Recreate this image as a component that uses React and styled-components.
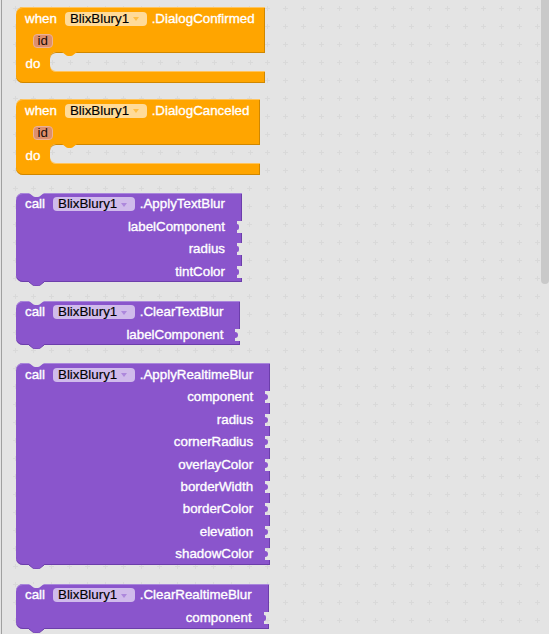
import React from 'react';
import styled, { createGlobalStyle, css } from 'styled-components';

const ROW = 22.45;
const FONT = 13.33;

const PURPLE = { base: '#8a55cc', light: '#a986dc', dark: '#6c3eab', arrow: '#ad88dc' };
const ORANGE = { base: '#ffa500', light: '#ffc45c', dark: '#d08700', arrow: '#ffbf45' };

const gridSvg =
  "data:image/svg+xml,%3Csvg xmlns='http://www.w3.org/2000/svg' width='18' height='18'%3E%3Cpath d='M7 9.5h5M9.5 7v5' stroke='%23d9d9d9' stroke-width='1'/%3E%3C/svg%3E";

const canvasBg = css`
  background-color: #e4e4e4;
  background-image: url("${gridSvg}");
  background-position: 6px -1px;
  background-attachment: fixed;
`;

const GlobalStyle = createGlobalStyle`
  html, body {
    margin: 0;
    padding: 0;
    width: 549px;
    height: 634px;
    overflow: hidden;
    background: #e4e4e4;
  }
  body {
    font-family: "Liberation Sans", Arial, sans-serif;
  }
`;

const Page = styled.div`
  position: relative;
  width: 549px;
  height: 634px;
  box-sizing: border-box;
  padding-left: 1px;
  background: #e4e4e4;
  overflow: hidden;
`;

const Workspace = styled.div`
  height: 100%;
  box-sizing: border-box;
  border-left: 1px solid #a0a0a0;
  ${canvasBg}
  padding: 7px 0 0 14px;
  display: flex;
  flex-direction: column;
  align-items: flex-start;
`;

const Scrollbar = styled.div`
  position: absolute;
  top: -4px;
  right: 0;
  width: 8px;
  height: 288px;
  border-radius: 4px;
  background: #c9c9c9;
`;

/* ---------- shared pieces ---------- */

const Label = styled.span`
  color: #fff;
  font-size: ${FONT}px;
  line-height: 14px;
  padding-top: 1px;
  white-space: nowrap;
  -webkit-text-stroke: 0.35px #fff;
`;

const Dropdown = styled.span`
  display: inline-flex;
  align-items: center;
  gap: 4px;
  height: 14px;
  padding: 0 8px 0 5px;
  margin: 1px 4.5px 0 8px;
  border-radius: 4px;
  background: rgba(255, 255, 255, 0.6);
  color: #000;
  font-size: ${FONT}px;
  line-height: 14px;
  white-space: nowrap;
  -webkit-text-stroke: 0.15px #000;
`;

const Arrow = styled.span`
  width: 0;
  height: 0;
  border-left: 3px solid transparent;
  border-right: 3px solid transparent;
  border-top: 4px solid ${(p) => p.$color};
  margin-top: 1px;
`;

const Row = styled.div`
  display: flex;
  align-items: center;
  height: ${ROW}px;
  white-space: nowrap;
`;

const Shape = styled.svg`
  position: absolute;
  left: 12.5px;
  display: block;
`;

const TopNotch = styled(Shape)`
  top: 0;
`;

const BottomTab = styled(Shape)`
  top: calc(100% - 1px);
`;

const tabPath = 'M0 0 L4.5 3.6 Q5 4 6 4 L9 4 Q10 4 10.5 3.6 L15 0 Z';

/* ---------- event (when) block ---------- */

const EventBlock = styled.div`
  display: inline-flex;
  flex-direction: column;
  margin-top: ${(p) => p.$gap}px;
`;

const EventHeader = styled.div`
  padding: 0 10.5px 0 9px;
  background: ${ORANGE.base};
  border-radius: 7px 0 0 0;
  box-shadow: inset 0 1px 0 ${ORANGE.light}, inset -1px 0 0 ${ORANGE.dark};
`;

const ParamChip = styled.span`
  display: inline-flex;
  align-items: center;
  box-sizing: border-box;
  height: 14px;
  padding: 0 4px;
  margin: 1px 0 0 7.5px;
  border-radius: 4px;
  background: rgb(222, 143, 108);
  border: 1px solid rgb(236, 178, 150);
  color: #1a0d06;
  font-size: ${FONT}px;
  line-height: 12px;
`;

const StatementRow = styled.div`
  display: flex;
  height: 20px;
  background: ${ORANGE.base};
`;

const DoLabel = styled(Label)`
  box-sizing: border-box;
  width: 33.5px;
  padding: 0 0 0 9.5px;
  line-height: ${ROW + 1}px;
  height: 20px;
`;

const Slot = styled.div`
  position: relative;
  flex: 1;
  border-radius: 6px 0 0 6px;
  ${canvasBg}
  box-shadow: inset 0 1px 0 ${ORANGE.dark}, inset 0 -1px 0 ${ORANGE.light};
`;

const SlotTab = styled(Shape)`
  left: 12px;
  top: 0;
`;

const EventFooter = styled.div`
  height: 11px;
  background: ${ORANGE.base};
  border-radius: 0 0 0 7px;
  box-shadow: inset 0 -1px 0 ${ORANGE.dark}, inset -1px 0 0 ${ORANGE.dark};
`;

/* ---------- call block ---------- */

const CallBlock = styled.div`
  position: relative;
  display: inline-grid;
  grid-template-columns: auto 17px;
  grid-auto-rows: ${ROW}px;
  align-items: center;
  padding-left: 9px;
  margin-top: ${(p) => p.$gap}px;
  background: ${PURPLE.base};
  border-radius: 7px 0 0 7px;
  box-shadow: inset 0 1px 0 ${PURPLE.light}, inset -1px 0 0 ${PURPLE.dark},
    inset 0 -1px 0 ${PURPLE.dark};
`;

const CallRow = styled(Row)`
  grid-column: 1;
`;

const InputLabel = styled(Label)`
  grid-column: 1;
  justify-self: end;
`;

const Connector = styled.span`
  grid-column: 2;
  justify-self: end;
  position: relative;
  width: 5px;
  height: 12px;
  margin-top: 1px;
  ${canvasBg}
  &::after {
    content: '';
    position: absolute;
    left: 0;
    top: 3px;
    width: 2.5px;
    height: 6px;
    background: ${PURPLE.base};
    border-radius: 0 3px 3px 0;
  }
`;

/* ---------- components ---------- */

function ComponentDropdown({ palette }) {
  return (
    <Dropdown>
      BlixBlury1
      <Arrow $color={palette.arrow} />
    </Dropdown>
  );
}

function WhenBlock({ event, gap }) {
  return (
    <EventBlock $gap={gap}>
      <EventHeader>
        <Row>
          <Label>when</Label>
          <ComponentDropdown palette={ORANGE} />
          <Label>.{event}</Label>
        </Row>
        <Row>
          <ParamChip>id</ParamChip>
        </Row>
      </EventHeader>
      <StatementRow>
        <DoLabel>do</DoLabel>
        <Slot>
          <SlotTab width="15" height="4" viewBox="0 0 15 4">
            <path d={tabPath} fill={ORANGE.base} />
          </SlotTab>
        </Slot>
      </StatementRow>
      <EventFooter />
    </EventBlock>
  );
}

function MethodBlock({ method, inputs, gap }) {
  return (
    <CallBlock $gap={gap}>
      <TopNotch width="15" height="4" viewBox="0 0 15 4">
        <path d={tabPath} fill="#e4e4e4" />
      </TopNotch>
      <CallRow>
        <Label>call</Label>
        <ComponentDropdown palette={PURPLE} />
        <Label>.{method}</Label>
      </CallRow>
      {inputs.map((name) => (
        <React.Fragment key={name}>
          <InputLabel>{name}</InputLabel>
          <Connector />
        </React.Fragment>
      ))}
      <BottomTab width="15" height="5" viewBox="0 0 15 5">
        <path d="M0 0 L0 1 L4.5 4.6 Q5 5 6 5 L9 5 Q10 5 10.5 4.6 L15 1 L15 0 Z" fill={PURPLE.base} />
        <path d="M0 1 L4.5 4.6 Q5 5 6 5 L9 5 Q10 5 10.5 4.6 L15 1" fill="none" stroke={PURPLE.dark} strokeWidth="1" />
      </BottomTab>
    </CallBlock>
  );
}

const events = [
  { event: 'DialogConfirmed', gap: 0 },
  { event: 'DialogCanceled', gap: 16.4 },
];

const methods = [
  { method: 'ApplyTextBlur', inputs: ['labelComponent', 'radius', 'tintColor'], gap: 17.5 },
  { method: 'ClearTextBlur', inputs: ['labelComponent'], gap: 18.2 },
  {
    method: 'ApplyRealtimeBlur',
    inputs: [
      'component',
      'radius',
      'cornerRadius',
      'overlayColor',
      'borderWidth',
      'borderColor',
      'elevation',
      'shadowColor',
    ],
    gap: 17.7,
  },
  { method: 'ClearRealtimeBlur', inputs: ['component'], gap: 18.6 },
];

export default function App() {
  return (
    <>
      <GlobalStyle />
      <Page>
        <Workspace>
          {events.map((e) => (
            <WhenBlock key={e.event} {...e} />
          ))}
          {methods.map((m) => (
            <MethodBlock key={m.method} {...m} />
          ))}
        </Workspace>
        <Scrollbar />
      </Page>
    </>
  );
}
